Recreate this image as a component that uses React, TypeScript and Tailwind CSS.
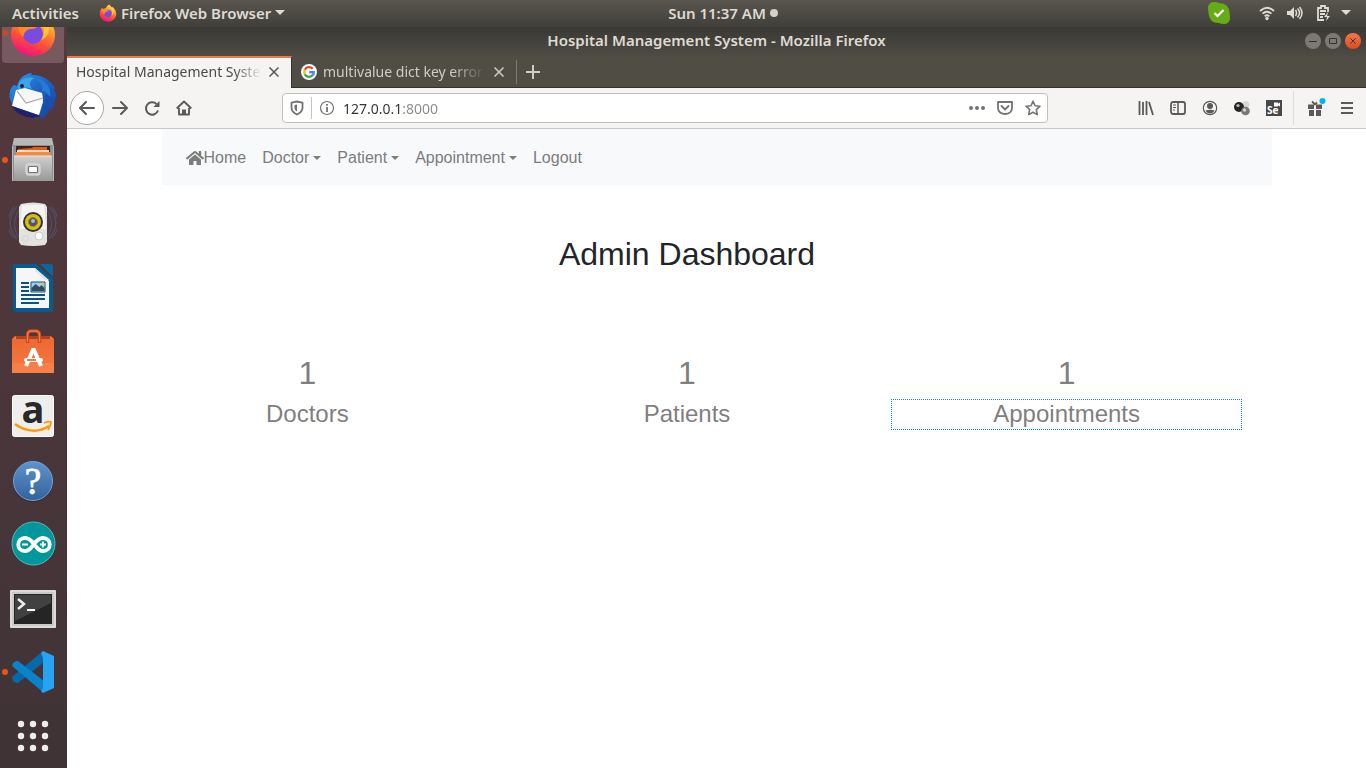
import type { ReactNode } from "react";
import { FaHome } from "react-icons/fa";

const uiFont = "font-['Noto_Sans',sans-serif]";
const pageFont = "font-['Liberation_Sans',sans-serif]";

function FirefoxLogo({ className, id }: { className: string; id: string }) {
  return (
    <svg viewBox="0 0 48 48" className={className} aria-hidden="true">
      <defs>
        <linearGradient id={id} x1="0.8" y1="0" x2="0.4" y2="1">
          <stop offset="0" stopColor="#fff04a" />
          <stop offset="0.35" stopColor="#ffa32a" />
          <stop offset="0.7" stopColor="#ff4b3c" />
          <stop offset="1" stopColor="#f0157c" />
        </linearGradient>
      </defs>
      <path d="M27 1c4 4 6 6 7 10 1-1 1-3 1-4 6 4 11 11 11 19 0 12-10 21-22 21S2 38 2 26c0-7 3-13 7-17l1 5c2-2 5-3 8-3 2-4 5-8 9-10z" fill={`url(#${id})`} />
      <circle cx="24" cy="25" r="10" fill="#7a4be0" />
      <path d="M10 14c5-2 9 0 12 3 2 1 5 0 6 1-2 2-5 2-7 2-4 1-6 4-7 8-4-4-6-9-4-14z" fill="#ff8a2a" />
      <path d="M27 1c-2 6 4 9 7 15 2 5 1 11-2 15 8-3 11-13 4-21C34 6 28 5 27 1z" fill="#ffd83d" opacity="0.7" />
    </svg>
  );
}

function ThunderbirdLogo() {
  return (
    <svg viewBox="0 0 48 48" className="size-12" aria-hidden="true">
      <defs>
        <linearGradient id="tb" x1="0" y1="0" x2="1" y2="1">
          <stop offset="0" stopColor="#2f9be8" />
          <stop offset="0.5" stopColor="#1c62c4" />
          <stop offset="1" stopColor="#1b3f9a" />
        </linearGradient>
      </defs>
      <path d="M12 6c3-3 7-5 11-5l-1 2c10-1 20 5 24 13l-1 1 3 8-2 1c0 6-2 10-5 13l-1-1c-2 5-5 8-9 9l1-3-9 3 5-5C14 42 4 36 1 27c-1-6 0-11 4-14l3 1c1-3 2-6 4-8z" fill="url(#tb)" />
      <path d="M7 18l26 3 1 9-4 13L3 34z" fill="#fff" />
      <path d="M7 18l9-2 17 5 1 7-16 4z" fill="#f7f7f7" />
      <path d="M8 19l9 12 17-5" fill="none" stroke="#a9a9a9" strokeWidth="1.2" />
      <path d="M3 34l25 9 4 1-8 2C14 45 6 41 3 34z" fill="#21206b" />
      <path d="M9 18C8 9 15 4 25 6c-5 3-5 7-2 11-5-2-10-2-14 1z" fill="#3ba5e8" />
      <path d="M24 6c11 0 19 8 17 20-2-5-5-7-8-7 2-6-3-11-9-13z" fill="#257bd3" />
      <circle cx="13" cy="14" r="2" fill="#1a2442" />
      <path d="M37 22l-3 21c6-4 9-11 9-17z" fill="#1b4ea9" />
    </svg>
  );
}

function FilesLogo() {
  return (
    <svg viewBox="0 0 48 48" className="size-12" aria-hidden="true">
      <defs>
        <linearGradient id="files" x1="0" y1="0" x2="0" y2="1">
          <stop offset="0" stopColor="#cfcfcf" />
          <stop offset="1" stopColor="#989898" />
        </linearGradient>
      </defs>
      <path d="M5 2h38l2 9v34H3V11z" fill="#b8b8b8" />
      <path d="M4 9h40v36H4z" fill="#929292" />
      <path d="M7 10h34v10H7z" fill="#2e2925" />
      <path d="M9 13l14-1 1-1h14v9H9z" fill="#e65b1c" />
      <path d="M8 14h32v2H8z" fill="#f8d9b8" />
      <path d="M7 16h34v5H7z" fill="#f68c42" />
      <path d="M5 20h38v25H5z" fill="url(#files)" />
      <path d="M5 20h38" stroke="#e8e8e8" />
      <rect x="17" y="28" width="14" height="11" rx="2" fill="#c6c6c6" stroke="#e4e4e4" />
      <rect x="19.500" y="30.500" width="9" height="6" rx="1" fill="#fff" stroke="#777" strokeWidth="1.200" />
    </svg>
  );
}

function SpeakerLogo() {
  return (
    <svg viewBox="0 0 48 48" className="size-12" aria-hidden="true">
      <g fill="none" stroke="#55628a" strokeWidth="1.3" opacity="0.5">
        <path d="M8 7C-1 17-1 28 8 39M5 7C-3 17-3 29 5 38M10 10c-6 9-6 19 0 27M40 7c9 10 9 21 0 32M43 7c8 10 8 22 0 31M38 10c6 9 6 19 0 27" />
      </g>
      <path d="M12 4q12-3 24 0l2 3v35l-2 3q-12 2-24 0l-2-3V7z" fill="#e2e2e0" />
      <path d="M13 5h22l2 24H11z" fill="#f4f4f4" />
      <circle cx="24" cy="22" r="10" fill="#343434" />
      <circle cx="24" cy="22" r="8" fill="#d9bd18" />
      <circle cx="24" cy="22" r="4.5" fill="#525663" stroke="#93851f" />
      <circle cx="24" cy="21" r="2" fill="#aeb4c4" />
      <circle cx="30" cy="36" r="4" fill="#fff" stroke="#cacaca" />
      <rect x="14" y="36" width="5" height="5" rx="1" fill="none" stroke="#d5d5d5" />
    </svg>
  );
}

function WriterLogo() {
  return (
    <svg viewBox="0 0 48 48" className="size-12" aria-hidden="true">
      <path d="M6 0h21l17 15v30q0 3-3 3H7q-3 0-3-3V3q0-3 2-3z" fill="#075b91" />
      <path d="M31 0h10q3 0 3 3v10z" fill="#0a689f" />
      <path d="M7 4h19l14 13v27H7z" fill="#f6f6f6" />
      <path d="M26 4v3l10 9h4z" fill="#dfe5e9" />
      <path d="M12 19h8m-8 4h8m-8 4h8m-8 4h24m-24 4h24m-24 4h18" stroke="#095482" strokeWidth="2" />
      <path d="M22 18h14v10H22z" fill="#9fd0ef" stroke="#095482" />
      <path d="M22.500 27v-3l4-4 4 3 2-2 3 3v3z" fill="#314d59" />
      <circle cx="34" cy="20" r="1.5" fill="#f4b940" />
    </svg>
  );
}

function SoftwareLogo() {
  return (
    <svg viewBox="0 0 48 48" className="size-12" aria-hidden="true">
      <defs>
        <linearGradient id="bag" x1="0" y1="0" x2="0" y2="1">
          <stop offset="0" stopColor="#ee6933" />
          <stop offset="1" stopColor="#f47943" />
        </linearGradient>
      </defs>
      <path d="M5 8h38l2 4H3z" fill="#b73f1b" />
      <path d="M3 11h42v34H3z" fill="url(#bag)" />
      <path d="M3 35h42v10H3z" fill="#f98650" opacity="0.55" />
      <path d="M3 11l4-3v3zm42 0l-4-3v3z" fill="#ef7b49" />
      <path d="M18.500 15V7q0-4 4-4h4q4 0 4 4v8" fill="none" stroke="#c34720" strokeWidth="3.500" />
      <path d="M18.500 14V7q0-4 4-4h4q4 0 4 4v7" fill="none" stroke="#f27c50" strokeWidth="1.300" />
      <path d="M17 38l7-16h1l7 16" fill="none" stroke="#fff" strokeWidth="4" />
      <rect x="15" y="30" width="19" height="4" rx="2" fill="#fff" />
      <path d="M18 32h9" stroke="#ee6933" strokeWidth="1.800" />
    </svg>
  );
}

function AmazonLogo() {
  return (
    <svg viewBox="0 0 48 48" className="size-12 overflow-visible" aria-hidden="true">
      <rect x="3.500" y="3.500" width="41" height="41" rx="2" fill="#eeeeec" stroke="#fff" />
      <text x="24" y="31" textAnchor="middle" fontFamily="Open Sans, sans-serif" fontWeight="700" fontSize="38" fill="#292929">a</text>
      <path d="M6 32c12 9 25 8 34 2" fill="none" stroke="#ff9900" strokeWidth="2.500" />
      <path d="M35 31q5-2 7-1-.2 4-3 8" fill="none" stroke="#ff9900" strokeWidth="1.800" />
    </svg>
  );
}

function HelpLogo() {
  return (
    <svg viewBox="0 0 48 48" className="size-12 overflow-visible" aria-hidden="true">
      <defs>
        <linearGradient id="help" x1="0" y1="0" x2="0" y2="1">
          <stop offset="0" stopColor="#5d94cc" />
          <stop offset="1" stopColor="#33629b" />
        </linearGradient>
      </defs>
      <circle cx="24" cy="26" r="20" fill="#392830" />
      <circle cx="24" cy="25" r="19.500" fill="url(#help)" stroke="#6fa4dc" />
      <text x="24" y="38" textAnchor="middle" fontFamily="Liberation Serif, serif" fontSize="37" fill="#fff" stroke="#fff" strokeWidth="0.800">?</text>
    </svg>
  );
}

function ArduinoLogo() {
  return (
    <svg viewBox="0 0 48 48" className="size-12" aria-hidden="true">
      <circle cx="24.500" cy="23.500" r="21.500" fill="#00979c" stroke="#5eb8b8" />
      <path d="M25 24c-3-4-5-6-9-6-9 0-9 13 0 13 4 0 6-3 9-7 3-4 5-6 9-6 9 0 9 13 0 13-4 0-6-3-9-7z" fill="none" stroke="#fff" strokeWidth="3.800" />
      <path d="M13 24.500h6m12 0h6m-3-3v6" stroke="#fff" strokeWidth="1.800" />
    </svg>
  );
}

function TerminalLogo() {
  return (
    <svg viewBox="0 0 48 48" className="size-12" aria-hidden="true">
      <rect x="1" y="6" width="46" height="38" rx="1" fill="#c9c9c7" />
      <rect x="2" y="7" width="44" height="36" fill="none" stroke="#eee" />
      <rect x="5" y="10" width="38" height="30" fill="#252525" />
      <path d="M6 11h36v8L6 37z" fill="#414141" />
      <path d="M9 15l6 5-6 5" fill="none" stroke="#eee" strokeWidth="2.500" />
      <path d="M18 26h8" stroke="#fff" strokeWidth="2" />
    </svg>
  );
}

function CodeLogo() {
  return (
    <svg viewBox="0 0 48 48" className="size-12" aria-hidden="true">
      <path d="M34 3L3 29l1 4 3 2h2l26-21z" fill="#0869aa" />
      <path d="M9 13l26 20v12L3 18l1-3 3-2z" fill="#0a82cc" />
      <path d="M34 3l11 5v32l-11 5-2-2 2-3V10l-2-5z" fill="#26a3f3" />
    </svg>
  );
}

function AppGrid() {
  return (
    <svg viewBox="0 0 48 48" className="size-12" fill="#eeeeec" aria-hidden="true">
      {[12, 24, 36].map((y) => [12, 24, 36].map((x) => <circle key={`${x}-${y}`} cx={x} cy={y} r="3.200" />))}
    </svg>
  );
}

const launchers: { name: string; icon: ReactNode; running?: boolean }[] = [
  { name: "Thunderbird Mail", icon: <ThunderbirdLogo /> },
  { name: "Files", icon: <FilesLogo />, running: true },
  { name: "Rhythmbox", icon: <SpeakerLogo /> },
  { name: "LibreOffice Writer", icon: <WriterLogo /> },
  { name: "Ubuntu Software", icon: <SoftwareLogo /> },
  { name: "Amazon", icon: <AmazonLogo /> },
  { name: "Help", icon: <HelpLogo /> },
  { name: "Arduino IDE", icon: <ArduinoLogo /> },
  { name: "Terminal", icon: <TerminalLogo /> },
  { name: "Visual Studio Code", icon: <CodeLogo />, running: true },
  { name: "Show Applications", icon: <AppGrid /> },
];

function RunningDot() {
  return <span className="absolute left-0.5 top-1/2 size-1.5 -translate-y-1/2 rounded-full bg-[#e95420]" />;
}

function Dock() {
  return (
    <nav aria-label="Dock" className="flex w-[67px] shrink-0 flex-col overflow-hidden bg-linear-to-b from-[#55393e] to-[#3f3336]">
      <div className="flex h-[37px] shrink-0 flex-col justify-end overflow-hidden">
        <button aria-label="Firefox" className="relative mb-px ml-0.5 flex h-[60px] w-[62px] shrink-0 items-center justify-center rounded bg-[#765a60]">
          <FirefoxLogo className="size-12" id="ff-dock" />
          <span className="absolute left-0 top-[27px] size-1.5 rounded-full bg-[#c24a2c]" />
        </button>
      </div>
      {launchers.map((l) => (
        <button key={l.name} aria-label={l.name} className="relative flex h-16 w-full shrink-0 items-center justify-center pr-0.5">
          {l.running && <RunningDot />}
          {l.icon}
        </button>
      ))}
    </nav>
  );
}

function Arrow({ className }: { className: string }) {
  return (
    <svg viewBox="0 0 10 5" className={className} fill="currentColor" aria-hidden="true">
      <path d="M0 0h10L5 5z" />
    </svg>
  );
}

function TopBar() {
  return (
    <header className={`grid h-[27px] shrink-0 grid-cols-3 items-center bg-linear-to-b from-[#59564e] to-[#403f3a] pb-0.5 text-[15px] leading-5 font-semibold text-[#dfdbd2] ${uiFont}`}>
      <div className="flex items-center pl-3">
        <button>Activities</button>
        <button className="ml-5 flex items-center whitespace-nowrap">
          <FirefoxLogo className="mr-1 size-[18px]" id="ff-bar" />
          Firefox Web Browser
          <Arrow className="ml-1 h-[5px] w-2.5" />
        </button>
      </div>
      <button className="flex items-center justify-center gap-1 pl-20">
        <span>Sun 11:37 AM</span>
        <span className="size-2 rounded-full bg-[#d3d0c9]" />
      </button>
      <div className="flex items-center justify-end pr-[15px]">
        <svg viewBox="0 0 22 22" className="mr-[29px] size-[22px]" aria-hidden="true">
          <path d="M6 0q3 0 5 1 10 0 10.500 10 .5 3 .5 6-1 5-6 5-3 0-5-1Q1 21 .5 11 0 8 0 5 1 0 6 0z" fill="#67ab18" />
          <path d="M6.500 11l3 3 6-6" fill="none" stroke="#fff" strokeWidth="2.200" />
        </svg>
        <svg viewBox="0 0 16 16" className="mr-3 size-4" fill="none" stroke="currentColor" strokeWidth="1.800" aria-hidden="true">
          <path d="M1 6q7-6.500 14 0M3.500 8.700q4.500-4 9 0M5.700 11.200q2.300-2 4.600 0" />
          <circle cx="8" cy="13.500" r="1.700" fill="currentColor" stroke="none" />
        </svg>
        <svg viewBox="0 0 16 16" className="mr-3 size-4" fill="none" stroke="currentColor" strokeWidth="1.500" aria-hidden="true">
          <path d="M0 6h3l4-4v12L3 10H0z" fill="currentColor" stroke="none" />
          <path d="M8.500 5q2 3 0 6M10.500 3.500q4 4.500 0 9M12.500 2q5 6 0 12" />
        </svg>
        <svg viewBox="0 0 16 18" className="mr-2.5 h-[18px] w-4" fill="none" stroke="currentColor" strokeWidth="1.800" aria-hidden="true">
          <path d="M13 8V4h-3V2H6v2H3v12h6M5 7h6M5 10h5M5 13h3" />
          <path d="M13 8l-4 5h3l-1 4 4-5h-3z" fill="currentColor" stroke="none" />
        </svg>
        <Arrow className="h-[5px] w-2.5" />
      </div>
    </header>
  );
}

function CloseMark({ className }: { className: string }) {
  return (
    <svg viewBox="0 0 10 10" className={className} fill="none" stroke="currentColor" strokeWidth="1.500" aria-hidden="true">
      <path d="M0.500 0.500l9 9M9.500 0.500l-9 9" />
    </svg>
  );
}

function TitleBar() {
  return (
    <div className={`relative flex h-[29px] items-center justify-center bg-linear-to-b from-[#3a3935] to-[#4e4b44] pb-1 text-[15px] leading-5 font-semibold text-[#dfdbd2] ${uiFont}`}>
      <span>Hospital Management System - Mozilla Firefox</span>
      <div className="absolute top-1.5 right-[5px] flex gap-1 text-[#34332f]">
        <button aria-label="Minimize" className="flex size-4 items-center justify-center rounded-full bg-[#7b7972]">
          <svg viewBox="0 0 8 8" className="size-2" stroke="currentColor" aria-hidden="true"><path d="M0 4.500h8" /></svg>
        </button>
        <button aria-label="Maximize" className="flex size-4 items-center justify-center rounded-full bg-[#7b7972]">
          <svg viewBox="0 0 8 8" className="size-2" stroke="currentColor" fill="none" aria-hidden="true"><path d="M0.500 1.500h7v5h-7z" /></svg>
        </button>
        <button aria-label="Close window" className="flex size-4 items-center justify-center rounded-full bg-linear-to-b from-[#f4764a] to-[#df4a1d]">
          <CloseMark className="size-1.5" />
        </button>
      </div>
    </div>
  );
}

function GoogleLogo() {
  return (
    <svg viewBox="0 0 16 16" className="mr-1.5 size-4 shrink-0" fill="none" strokeWidth="2.300" aria-hidden="true">
      <circle cx="8" cy="8" r="8" fill="#fff" />
      <path d="M11.600 4.700A4.800 4.800 0 0 0 3.800 5.800" stroke="#ea4335" />
      <path d="M3.800 5.800a4.800 4.800 0 0 0 0 4.400" stroke="#fbbc05" />
      <path d="M3.800 10.200a4.800 4.800 0 0 0 7.300 1.500" stroke="#34a853" />
      <path d="M11.100 11.700A4.600 4.600 0 0 0 12.800 8.200H8.200" stroke="#4285f4" />
    </svg>
  );
}

function TabStrip() {
  return (
    <div role="tablist" className={`flex h-8 bg-[#504d45] text-sm ${uiFont}`}>
      <div role="tab" aria-selected="true" className="flex w-[225px] shrink-0 items-center border-t-2 border-r border-t-[#f07746] border-r-[#33322e] bg-[#f5f4f2] pb-0.5 pl-[9px] text-[#4b4a46]">
        <span className="w-[186px] overflow-hidden whitespace-nowrap mask-r-from-85%">Hospital Management System</span>
        <button aria-label="Close tab" className="ml-[7px] text-[#555]"><CloseMark className="size-2.5" /></button>
      </div>
      <div className="flex flex-1 items-center border-b border-[#33322e] text-[#d0cdc5]">
        <div role="tab" aria-selected="false" className="flex h-6 w-[225px] shrink-0 items-center border-r border-[#7d7a72] pl-[9px]">
          <GoogleLogo />
          <span className="w-[162px] overflow-hidden whitespace-nowrap mask-r-from-80%">multivalue dict key error</span>
          <button aria-label="Close tab" className="ml-[9px]"><CloseMark className="size-2.5" /></button>
        </div>
        <button aria-label="New tab" className="ml-[9px]">
          <svg viewBox="0 0 14 14" className="size-3.5" stroke="currentColor" strokeWidth="2" aria-hidden="true"><path d="M0 7h14M7 0v14" /></svg>
        </button>
      </div>
    </div>
  );
}

function ToolIcon({ name, children }: { name: string; children: ReactNode }) {
  return (
    <button aria-label={name} className="flex size-8 shrink-0 items-center justify-center">
      <svg viewBox="0 0 16 16" className="size-4 overflow-visible" fill="none" stroke="currentColor" strokeWidth="1.800" aria-hidden="true">
        {children}
      </svg>
    </button>
  );
}

function Toolbar() {
  return (
    <div className={`flex h-[41px] items-center border-b border-[#cac7c4] bg-[#f5f4f2] text-[#5b5a58] ${uiFont}`}>
      <button aria-label="Back" className="ml-[3px] flex size-[34px] shrink-0 items-center justify-center rounded-full border border-[#a9a8a6] bg-white">
        <svg viewBox="0 0 16 16" className="size-4" fill="none" stroke="currentColor" strokeWidth="2" strokeLinecap="round" strokeLinejoin="round" aria-hidden="true"><path d="M15 8H1.500M7 2L1 8l6 6" /></svg>
      </button>
      <ToolIcon name="Forward"><path d="M1 8h13.500M9 2l6 6-6 6" strokeWidth="2" strokeLinecap="round" strokeLinejoin="round" /></ToolIcon>
      <ToolIcon name="Reload"><path d="M14 10.500A6.200 6.200 0 1 1 12.500 4" strokeWidth="2" /><path d="M15.500 1v6h-6z" fill="currentColor" stroke="none" /></ToolIcon>
      <ToolIcon name="Home page">
        <path d="M0.700 8.500L8 1.500l7.300 7M3 8v6.500h10V8" strokeWidth="1.900" strokeLinejoin="round" />
        <path d="M6 15V9.500h4V15z" fill="currentColor" stroke="none" />
      </ToolIcon>
      <div className="w-[82px] shrink" />
      <div className="flex h-[30px] min-w-0 flex-1 items-center rounded border border-[#c2c0bd] bg-white text-[#737373]">
        <svg viewBox="0 0 14 16" className="ml-[7px] h-4 w-3.5 shrink-0" fill="none" stroke="currentColor" strokeWidth="1.800" aria-hidden="true">
          <path d="M7 1.500l5.500 1.200V8c0 3-2.500 5-5.500 6.500C4 13 1.500 11 1.500 8V2.700z" />
          <path d="M7 4.500L4.500 5v3c0 1.500 1 2.500 2.500 3.500z" fill="currentColor" stroke="none" />
        </svg>
        <span className="mx-[7px] h-[22px] w-px shrink-0 bg-[#c4c4c4]" />
        <svg viewBox="0 0 16 16" className="size-4 shrink-0" fill="none" stroke="currentColor" aria-hidden="true">
          <circle cx="8" cy="8" r="6.500" strokeWidth="1.200" />
          <path d="M8 7v5M8 4v1.700" strokeWidth="1.800" />
        </svg>
        <input
          aria-label="Address"
          type="text"
          defaultValue="127.0.0.1:8000"
          className="ml-2 min-w-0 flex-1 bg-linear-[90deg,#333_59px,#8b8b8b_59px] bg-clip-text pt-0.5 text-sm text-transparent outline-none"
        />
        <button aria-label="Page actions" className="mr-3">
          <svg viewBox="0 0 16 16" className="size-4" fill="currentColor" aria-hidden="true"><circle cx="2" cy="8" r="2" /><circle cx="8" cy="8" r="2" /><circle cx="14" cy="8" r="2" /></svg>
        </button>
        <button aria-label="Save to Pocket" className="mr-3">
          <svg viewBox="0 0 16 16" className="size-4" fill="none" stroke="currentColor" strokeWidth="1.800" strokeLinejoin="round" aria-hidden="true"><path d="M1 2h14v6c0 8-14 8-14 0z" /><path d="M4.500 6L8 9.500 11.500 6" strokeLinecap="round" /></svg>
        </button>
        <button aria-label="Bookmark" className="mr-1.5">
          <svg viewBox="0 0 16 16" className="size-4" fill="none" stroke="currentColor" strokeWidth="1.600" strokeLinejoin="round" aria-hidden="true"><path d="M8 1.200l2 4.500 5 .5-3.700 3.400 1 5L8 12.200l-4.300 2.400 1-5L1 6.200l5-.5z" /></svg>
        </button>
      </div>
      <div className="w-[82px] shrink" />
      <ToolIcon name="Library"><path d="M1.500 1v14M5 2v13M8.500 1v14M11 2l4 13" /></ToolIcon>
      <ToolIcon name="Sidebars"><rect x="1" y="2" width="14" height="12" rx="2" /><path d="M8 2v12" strokeWidth="1.500" /><path d="M3 5h3M3 7.500h3M3 10h2" strokeWidth="1" /></ToolIcon>
      <ToolIcon name="Account">
        <circle cx="8" cy="8" r="6.700" strokeWidth="1.200" />
        <circle cx="8" cy="6" r="3" fill="currentColor" stroke="none" />
        <path d="M3.500 10.500q4.500-1.500 9 0-1.500 3-4.500 3t-4.500-3z" fill="currentColor" stroke="none" />
      </ToolIcon>
      <ToolIcon name="Molecule">
        <circle cx="12" cy="4.500" r="3.500" fill="#d8d8d6" stroke="none" />
        <circle cx="5" cy="7" r="5" fill="#252525" stroke="none" />
        <circle cx="4" cy="5.500" r="1.600" fill="#bbb" stroke="none" />
        <circle cx="11.500" cy="11" r="4.300" fill="#777" stroke="none" />
        <circle cx="10.500" cy="10" r="1.700" fill="#d2d2d2" stroke="none" />
      </ToolIcon>
      <ToolIcon name="Selenium IDE">
        <path d="M0 0h16v16H0z" fill="#484848" stroke="none" />
        <path d="M8 2.500h4v1l2-1v4l-2-1v1H8z" fill="#fff" stroke="none" />
        <text x="1" y="14" fontSize="10" fontWeight="700" fontFamily="Noto Sans, sans-serif" fill="#fff" stroke="none">Se</text>
      </ToolIcon>
      <span className="ml-[3px] mr-[5px] h-[34px] w-px shrink-0 bg-[#deddda]" />
      <ToolIcon name="What's new">
        <path d="M1 4.500h6V9H1zM9 4.500h6V9H9zM2 10h5v6H2zM9 10h5v6H9z" fill="currentColor" stroke="none" />
        <path d="M5 1.500l3 3 2-2" />
        <circle cx="15.500" cy="1" r="3" fill="#00b3f4" stroke="none" />
      </ToolIcon>
      <div className="mr-[3px]">
        <ToolIcon name="Menu"><path d="M2 3h12M2 8h12M2 13h12" /></ToolIcon>
      </div>
    </div>
  );
}

function Site() {
  const stats = [
    { value: 1, label: "Doctors" },
    { value: 1, label: "Patients" },
    { value: 1, label: "Appointments", focused: true },
  ];
  return (
    <main className={`flex-1 bg-white text-[#212529] ${pageFont}`}>
      <div className="mx-auto max-w-[1110px]">
        <nav aria-label="Site" className="flex h-14 items-center gap-4 bg-[#f8f9fa] px-6 pt-0.5 text-base text-[#7c7d7d]">
          <a href="#home" className="flex items-center"><FaHome className="size-[18px]" />Home</a>
          {["Doctor", "Patient", "Appointment"].map((name) => (
            <button key={name} className="flex items-center gap-1">
              {name}
              <Arrow className="h-1 w-2" />
            </button>
          ))}
          <a href="#logout">Logout</a>
        </nav>
        <div className="-ml-11 -mr-[15px] xl:mr-[15px]">
          <h1 className="mt-[50px] text-center text-[32px] leading-[38px]">Admin Dashboard</h1>
          <div className="mt-[81px] grid grid-cols-3 text-center text-[#7f7f7f]">
            {stats.map((s) => (
              <section key={s.label} className="px-3.5">
                <p className="mb-[7px] text-[32px] leading-[38px]">{s.value}</p>
                <div className={s.focused ? "border border-dotted border-[#007bff]" : "border border-transparent"}>
                  <a href={`#${s.label.toLowerCase()}`} className="block pb-px text-2xl leading-7">
                    {s.label}
                  </a>
                </div>
              </section>
            ))}
          </div>
        </div>
      </div>
    </main>
  );
}

export default function App() {
  return (
    <div className="flex h-screen flex-col overflow-hidden">
      <TopBar />
      <div className="flex min-h-0 flex-1">
        <Dock />
        <div className="flex min-w-0 flex-1 flex-col">
          <TitleBar />
          <TabStrip />
          <Toolbar />
          <Site />
        </div>
      </div>
    </div>
  );
}
